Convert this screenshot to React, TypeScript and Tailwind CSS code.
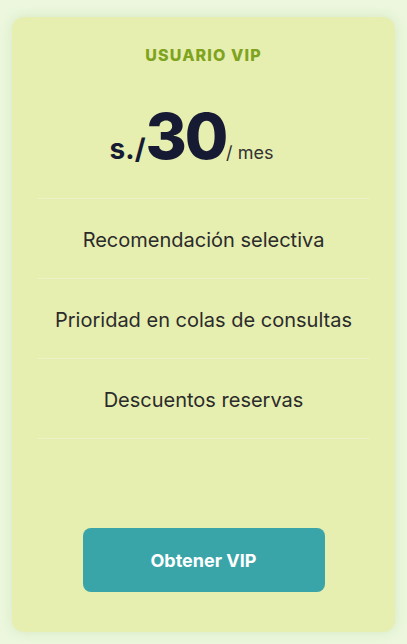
const features = [
  "Recomendación selectiva",
  "Prioridad en colas de consultas",
  "Descuentos reservas",
];

export default function App() {
  return (
    <div
      className="min-h-[644px] w-full bg-[#ecf7dd] px-3 pt-[17px] pb-3"
      style={{ fontFamily: "Inter, 'Noto Sans', sans-serif" }}
    >
      <div className="flex flex-col items-center rounded-xl bg-[#e6eeb0] px-[25px] pt-[28px] pb-[40px] shadow-[0_0_12px_rgba(150,190,120,0.25)]">
        <h2 className="text-[16px] leading-5 font-extrabold tracking-[0.07em] text-[#7ea31c]">
          USUARIO VIP
        </h2>
        <div className="mt-[40px] flex h-[64px] items-baseline justify-center pr-6 text-[#161a33]">
          <span className="text-[28px] leading-none font-bold">s./</span>
          <span className="text-[63px] leading-none font-extrabold tracking-[-0.035em]">30</span>
          <span className="text-[18px] leading-none text-[#333]">/ mes</span>
        </div>
        <ul className="mt-[29px] w-full border-t border-[#ecf1c6]">
          {features.map((f) => (
            <li
              key={f}
              className="flex h-[80px] items-center justify-center border-b border-[#ecf1c6] pt-[2px] text-[20px] text-[#2b2b2b]"
            >
              {f}
            </li>
          ))}
        </ul>
        <button className="mt-[89px] h-[64px] w-[242px] rounded-lg bg-[#3aa5a9] text-[18px] font-bold text-white">
          Obtener VIP
        </button>
      </div>
    </div>
  );
}
